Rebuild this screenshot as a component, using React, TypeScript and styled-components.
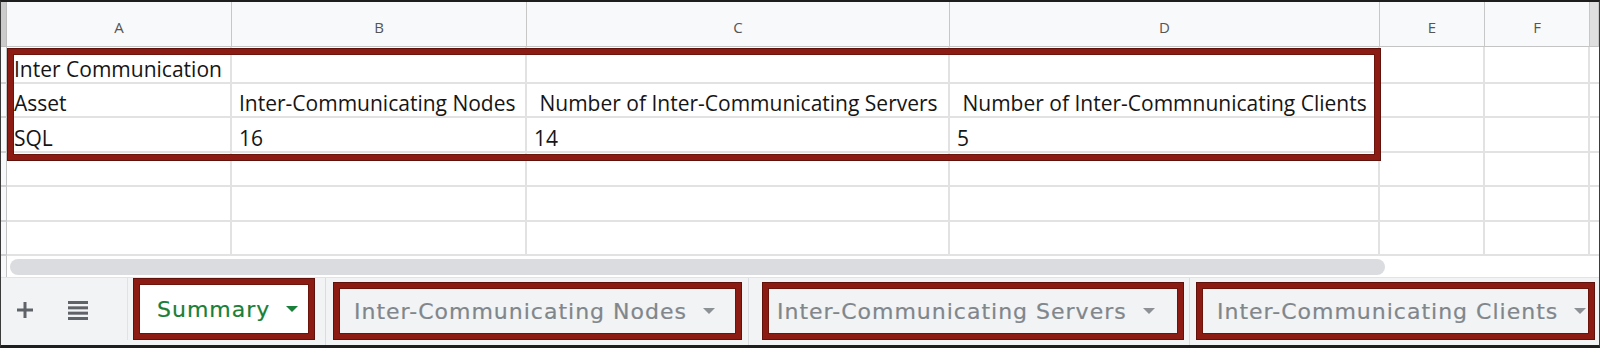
import React from "react";
import styled, { createGlobalStyle } from "styled-components";

const GlobalStyle = createGlobalStyle`
  html, body { margin: 0; padding: 0; background: #ffffff; }
  body { width: 1600px; height: 348px; overflow: hidden; }
  *, *::before, *::after { box-sizing: border-box; }
`;

const Frame = styled.div`
  width: 1600px;
  height: 348px;
  border-top: 2px solid #1e1e1e;
  border-left: 1px solid #3b3b3b;
  border-right: 1px solid #3b3b3b;
  border-bottom: 3px solid #1e1e1e;
  display: flex;
  flex-direction: column;
  background: #ffffff;
  overflow: hidden;
`;

const Sheet = styled.div`
  position: relative;
  display: grid;
  grid-template-columns: 6px 225px 295px 423px 430px 105px 105px 9px;
  grid-template-rows: 45px 37px 34px 35px 34px 35px 34px;
`;

const Corner = styled.div`
  background: #cbcbcb;
  border-right: 1px solid #bdbdbd;
  border-bottom: 1px solid #bdbdbd;
`;

const ColHead = styled.div<{ $edge?: boolean }>`
  background: ${(p) => (p.$edge ? "#dfdfdf" : "#f8f9fa")};
  border-right: 1px solid #c7c7c7;
  border-bottom: 1px solid #c4c4c4;
  display: flex;
  justify-content: center;
  align-items: center;
  padding-top: 6px;
  font-family: "Open Sans", "Liberation Sans", sans-serif;
  font-size: 15px;
  color: #555555;
`;

const RowHead = styled.div`
  background: #f8f9fa;
  border-right: 1px solid #c4c4c4;
  border-bottom: 2px solid #d2d2d2;
`;

const Cell = styled.div<{ $edge?: boolean }>`
  background: #ffffff;
  border-right: ${(p) => (p.$edge ? "none" : "2px solid #e2e2e2")};
  border-bottom: 2px solid #e2e2e2;
  display: flex;
  align-items: flex-end;
  padding: 0 0 1px 7px;
  font-family: "Open Sans", "Liberation Sans", sans-serif;
  font-size: 21px;
  line-height: 24px;
  color: #151515;
  white-space: pre;
  overflow: hidden;
`;

const Callout = styled.div`
  position: absolute;
  left: 6px;
  top: 46px;
  width: 1374px;
  height: 113px;
  border: 6px solid #8c1c13;
  outline: 1px solid #5e120b;
  outline-offset: -1px;
  box-shadow: inset 0 0 0 1px #6a140c;
  pointer-events: none;
`;

const ScrollStrip = styled.div`
  height: 21px;
  display: flex;
  align-items: flex-start;
  background: #ffffff;
`;

const StripStub = styled.div`
  width: 6px;
  align-self: stretch;
  background: #f8f9fa;
  border-right: 1px solid #c4c4c4;
`;

const ScrollPill = styled.div`
  margin: 3px 0 0 3px;
  width: 1375px;
  height: 16px;
  border-radius: 8px;
  background: #dadce0;
`;

const TabBar = styled.div`
  flex: 1;
  display: flex;
  align-items: flex-end;
  padding-bottom: 5px;
  background: #f1f3f4;
  border-top: 1px solid #e3e3e3;
`;

const Controls = styled.div`
  width: 127px;
  align-self: stretch;
  display: flex;
  align-items: center;
  padding: 2px 0 0 16px;
  border-right: 1px solid #e0e2e5;
  color: #5f6368;
`;

const IconButton = styled.span<{ $gap?: number }>`
  display: inline-flex;
  margin-left: ${(p) => p.$gap ?? 0}px;
`;

const Divider = styled.div<{ $before: number; $after: number }>`
  width: 1px;
  align-self: stretch;
  margin: 0 ${(p) => p.$after}px -5px ${(p) => p.$before}px;
  background: #dadce0;
`;

const Tab = styled.div<{ $active?: boolean; $w: number; $lead: number; $offset?: number }>`
  width: ${(p) => p.$w}px;
  height: ${(p) => (p.$active ? 62 : 58)}px;
  margin-left: ${(p) => p.$offset ?? 0}px;
  flex-shrink: 0;
  border: 6px solid #8c1c13;
  outline: 1px solid #5e120b;
  outline-offset: -1px;
  box-shadow: inset 0 0 0 1px #6a140c;
  background: ${(p) => (p.$active ? "#ffffff" : "#f1f3f4")};
  display: flex;
  align-items: center;
  padding-left: ${(p) => p.$lead}px;
  overflow: hidden;
  white-space: nowrap;
  font-family: "DejaVu Sans", "Open Sans", sans-serif;
  font-size: 22px;
  letter-spacing: 1px;
  -webkit-text-stroke: 0.2px currentColor;
  color: ${(p) => (p.$active ? "#188038" : "#80868b")};
`;

const Caret = styled.span<{ $active?: boolean }>`
  flex-shrink: 0;
  margin-left: 16px;
  width: 0;
  height: 0;
  border-left: 6px solid transparent;
  border-right: 6px solid transparent;
  border-top: 6px solid ${(p) => (p.$active ? "#188038" : "#8d9196")};
`;

const PlusIcon = () => (
  <svg width="16" height="16" viewBox="0 0 16 16">
    <rect x="6.5" y="0" width="3" height="16" fill="currentColor" />
    <rect x="0" y="6.5" width="16" height="3" fill="currentColor" />
  </svg>
);

const ListIcon = () => (
  <svg width="20" height="19" viewBox="0 0 20 19">
    <rect x="0" y="0" width="20" height="3" fill="currentColor" />
    <rect x="0" y="5.33" width="20" height="3" fill="currentColor" />
    <rect x="0" y="10.67" width="20" height="3" fill="currentColor" />
    <rect x="0" y="16" width="20" height="3" fill="currentColor" />
  </svg>
);

const columns = ["A", "B", "C", "D", "E", "F"];

const rows: string[][] = [
  ["Inter Communication", "", "", "", "", ""],
  [
    "Asset",
    "Inter-Communicating Nodes",
    " Number of Inter-Communicating Servers",
    " Number of Inter-Commnunicating Clients",
    "",
    "",
  ],
  ["SQL", "16", "14", "5", "", ""],
  ["", "", "", "", "", ""],
  ["", "", "", "", "", ""],
  ["", "", "", "", "", ""],
];

const tabs = [
  { name: "Summary", active: true, w: 182, lead: 18, offset: 5 },
  { name: "Inter-Communicating Nodes", w: 409, lead: 15, before: 10, after: 7 },
  { name: "Inter-Communicating Servers", w: 422, lead: 9, before: 6, after: 13 },
  { name: "Inter-Communicating Clients", w: 399, lead: 15, before: 5, after: 6 },
];

export default function App() {
  return (
    <>
      <GlobalStyle />
      <Frame>
        <Sheet>
          <Corner />
          {columns.map((c) => (
            <ColHead key={c}>{c}</ColHead>
          ))}
          <ColHead $edge />
          {rows.map((r, ri) => (
            <React.Fragment key={ri}>
              <RowHead />
              {r.map((v, ci) => (
                <Cell key={ci}>{v}</Cell>
              ))}
              <Cell $edge />
            </React.Fragment>
          ))}
          <Callout />
        </Sheet>
        <ScrollStrip>
          <StripStub />
          <ScrollPill />
        </ScrollStrip>
        <TabBar>
          <Controls>
            <IconButton>
              <PlusIcon />
            </IconButton>
            <IconButton $gap={35}>
              <ListIcon />
            </IconButton>
          </Controls>
          {tabs.map((t, i) => (
            <React.Fragment key={t.name}>
              {i > 0 && <Divider $before={t.before ?? 0} $after={t.after ?? 0} />}
              <Tab $active={t.active} $w={t.w} $lead={t.lead} $offset={t.offset}>
                {t.name}
                <Caret $active={t.active} />
              </Tab>
            </React.Fragment>
          ))}
        </TabBar>
      </Frame>
    </>
  );
}
